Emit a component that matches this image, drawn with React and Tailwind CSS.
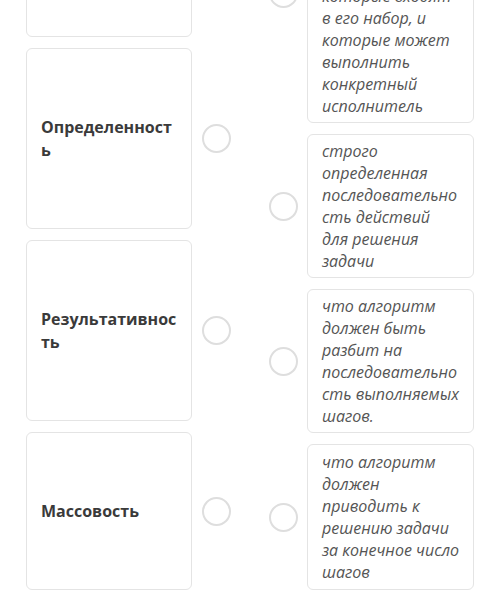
import React from "react";

const terms = [
  { id: 1, label: "Понятность", height: "h-[180px]" },
  { id: 2, label: "Определенность", height: "h-[181px]" },
  { id: 3, label: "Результативность", height: "h-[181px]" },
  { id: 4, label: "Массовость", height: "h-[158px]" },
];

const definitions = [
  {
    id: "a",
    text: "что алгоритм должен содержать только те команды, которые входят в\u00a0его набор, и которые может выполнить конкретный исполнитель",
    extra: "py-[5px] min-h-[260px] justify-end",
  },
  { id: "b", text: "строго определенная последовательность действий для\u00a0решения задачи", extra: "py-[5px]" },
  { id: "c", text: "что алгоритм должен быть разбит на последовательность выполняемых шагов.", extra: "py-[5px]" },
  { id: "d", text: "что алгоритм должен приводить к решению задачи за конечное число шагов", extra: "py-[6px]" },
];

const Radio = () => (
  <span className="block w-[29px] h-[29px] shrink-0 rounded-full border-[2.5px] border-[#dedede] bg-white" />
);

export default function App() {
  return (
    <div
      className="h-[601px] w-[500px] overflow-hidden bg-white flex items-end pl-[26px] pb-[11px] gap-[38px]"
      style={{ fontFamily: '"Open Sans", "Noto Sans", sans-serif' }}
    >
      {/* terms column */}
      <div className="flex flex-col gap-[11px]">
        {terms.map((t) => (
          <div key={t.id} className="flex items-center gap-[10px]">
            <div
              className={`${t.height} w-[166px] flex items-center rounded-[6px] border border-[#e4e4e4] bg-white px-[14px]`}
            >
              <span className="w-full text-[16px] leading-[23px] font-bold text-[#3a3a3a] [overflow-wrap:break-word]">
                {t.label}
              </span>
            </div>
            <Radio />
          </div>
        ))}
      </div>

      {/* definitions column */}
      <div className="flex flex-col gap-[11px]">
        {definitions.map((d) => (
          <div key={d.id} className="flex items-center gap-[9px]">
            <Radio />
            <div
              className={`w-[167px] flex flex-col rounded-[6px] border border-[#e4e4e4] bg-white pl-[14px] pr-[12px] ${d.extra}`}
            >
              <p className="text-[16px] leading-[22px] italic text-[#555555] [overflow-wrap:break-word]">
                {d.text}
              </p>
            </div>
          </div>
        ))}
      </div>
    </div>
  );
}
